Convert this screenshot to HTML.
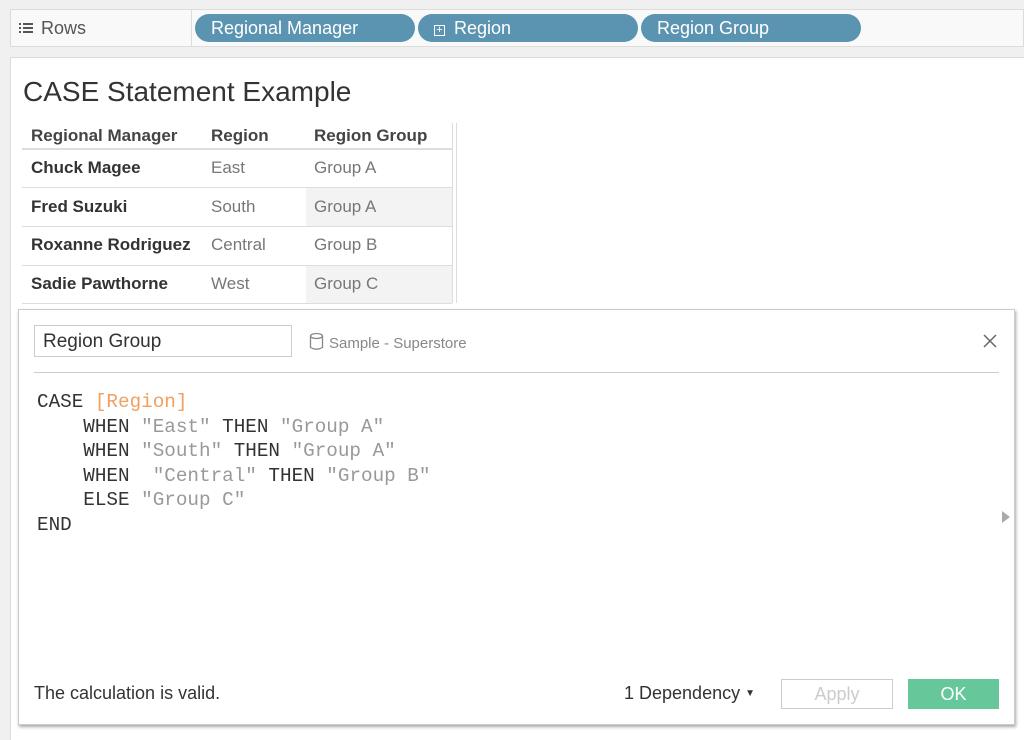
<!DOCTYPE html>
<html><head><meta charset="utf-8"><style>
*{margin:0;padding:0;box-sizing:border-box}
body{width:1024px;height:740px;background:#f0f0f0;font-family:"Liberation Sans",sans-serif;position:relative;overflow:hidden;color:#333}
.abs{position:absolute}
.shelf{left:10px;top:9px;width:1014px;height:38px;background:#f9f9f9;border:1px solid #dcdcdc}
.pill{top:14px;height:28px;width:220px;background:#5b94b1;color:#fff;border-radius:14px;font-size:18px;line-height:29px;padding-left:16px}
.main{left:10px;top:57px;width:1014px;height:683px;background:#fff;border-top:1px solid #dcdcdc;border-left:1px solid #dcdcdc}
.c{position:absolute;font-size:17px;line-height:38px}
.code{left:37px;top:390px;font-family:"Liberation Mono",monospace;font-size:19.3px;line-height:24.6px;color:#333;white-space:pre}
.s{color:#999}.o{color:#f0a060}
</style></head><body>
<div class="abs shelf"></div>
<div class="abs" style="left:191px;top:9px;width:1px;height:38px;background:#dcdcdc"></div>
<div class="abs" style="left:19px;top:18px;font-size:18px;color:#555">
<svg width="14" height="12" style="vertical-align:0;margin-right:8px"><g fill="#555"><rect x="0" y="1" width="2" height="2"/><rect x="4" y="1" width="10" height="2"/><rect x="0" y="5" width="2" height="2"/><rect x="4" y="5" width="10" height="2"/><rect x="0" y="9" width="2" height="2"/><rect x="4" y="9" width="10" height="2"/></g></svg>Rows</div>
<div class="abs pill" style="left:195px">Regional Manager</div>
<div class="abs pill" style="left:418px"><span style="display:inline-block;width:11px;height:11px;border:1px solid #fff;font-size:11px;line-height:9px;text-align:center;margin-right:9px;vertical-align:1px">+</span>Region</div>
<div class="abs pill" style="left:641px">Region Group</div>
<div class="abs main"></div>
<div class="abs" style="left:23px;top:76px;font-size:28px;color:#333">CASE Statement Example</div>
<!-- table -->
<div class="abs" style="left:452px;top:123px;width:5px;height:180px;border-left:1px solid #ddd;border-right:1px solid #ddd"></div>
<div class="abs" style="left:306px;top:188px;width:146px;height:38px;background:#f3f3f3"></div>
<div class="abs" style="left:306px;top:266px;width:146px;height:37px;background:#f3f3f3"></div>
<div class="abs" style="left:22px;top:148px;width:430px;height:2px;background:#ddd"></div>
<div class="abs" style="left:22px;top:187px;width:430px;height:1px;background:#ddd"></div>
<div class="abs" style="left:22px;top:226px;width:430px;height:1px;background:#ddd"></div>
<div class="abs" style="left:22px;top:265px;width:430px;height:1px;background:#ddd"></div>
<div class="abs" style="left:22px;top:303px;width:430px;height:1px;background:#ddd"></div>
<div class="c" style="left:31px;top:117px;font-weight:bold;color:#444">Regional Manager</div>
<div class="c" style="left:211px;top:117px;font-weight:bold;color:#444">Region</div>
<div class="c" style="left:314px;top:117px;font-weight:bold;color:#444">Region Group</div>
<div class="c" style="left:31px;top:149px;font-weight:bold">Chuck Magee</div>
<div class="c" style="left:31px;top:188px;font-weight:bold">Fred Suzuki</div>
<div class="c" style="left:31px;top:226px;font-weight:bold">Roxanne Rodriguez</div>
<div class="c" style="left:31px;top:265px;font-weight:bold">Sadie Pawthorne</div>
<div class="c" style="left:211px;top:149px;color:#777">East</div>
<div class="c" style="left:211px;top:188px;color:#777">South</div>
<div class="c" style="left:211px;top:226px;color:#777">Central</div>
<div class="c" style="left:211px;top:265px;color:#777">West</div>
<div class="c" style="left:314px;top:149px;color:#777">Group A</div>
<div class="c" style="left:314px;top:188px;color:#777">Group A</div>
<div class="c" style="left:314px;top:226px;color:#777">Group B</div>
<div class="c" style="left:314px;top:265px;color:#777">Group C</div>
<!-- dialog -->
<div class="abs" style="left:18px;top:309px;width:997px;height:416px;background:#fff;border:1px solid #ccc;box-shadow:1px 2px 3px rgba(0,0,0,.35)"></div>
<div class="abs" style="left:34px;top:325px;width:258px;height:32px;border:1px solid #ccc;font-size:19px;line-height:31px;padding-left:8px;color:#333">Region Group</div>
<div class="abs" style="left:309px;top:332px;font-size:15px;color:#888"><svg width="15" height="20" style="vertical-align:-4px;margin-right:5px"><ellipse cx="7.5" cy="4" rx="6" ry="2.5" fill="none" stroke="#888" stroke-width="1.3"/><path d="M1.5 4V15.5Q7.5 19 13.5 15.5V4" fill="none" stroke="#888" stroke-width="1.3"/></svg>Sample - Superstore</div>
<svg class="abs" style="left:983px;top:334px" width="14" height="14"><path d="M1 1L13 13M13 1L1 13" stroke="#666" stroke-width="1.5"/></svg>
<div class="abs" style="left:34px;top:372px;width:965px;height:1px;background:#ccc"></div>
<div class="abs code">CASE <span class="o">[Region]</span>
    WHEN <span class="s">"East"</span> THEN <span class="s">"Group A"</span>
    WHEN <span class="s">"South"</span> THEN <span class="s">"Group A"</span>
    WHEN  <span class="s">"Central"</span> THEN <span class="s">"Group B"</span>
    ELSE <span class="s">"Group C"</span>
END</div>
<svg class="abs" style="left:1002px;top:511px" width="8" height="12"><path d="M0 0L8 6L0 12Z" fill="#aaa"/></svg>
<div class="abs" style="left:34px;top:683px;font-size:18px;color:#333">The calculation is valid.</div>
<div class="abs" style="left:624px;top:683px;font-size:18px;color:#333">1 Dependency <span style="font-size:10px;vertical-align:3px">▼</span></div>
<div class="abs" style="left:781px;top:679px;width:112px;height:30px;border:1px solid #ccc;font-size:18px;line-height:28px;text-align:center;color:#ccc">Apply</div>
<div class="abs" style="left:908px;top:679px;width:91px;height:30px;background:#66c89a;font-size:18px;line-height:30px;text-align:center;color:#fff">OK</div>
</body></html>
